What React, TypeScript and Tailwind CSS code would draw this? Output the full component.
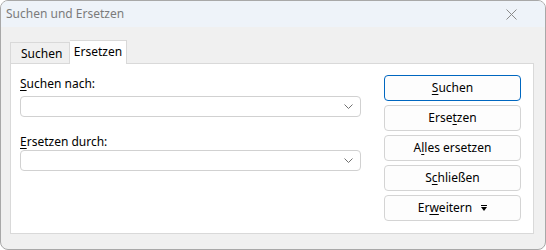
import React from "react";

const font = { fontFamily: '"Noto Sans", "Open Sans", sans-serif' };

function Chevron() {
  return (
    <svg width="9" height="5" viewBox="0 0 9 5" className="text-[#707070]">
      <path d="M0.5 0.5 L4.5 4.5 L8.5 0.5" fill="none" stroke="currentColor" strokeWidth="1" />
    </svg>
  );
}

function Combo() {
  return (
    <div className="h-[21px] w-[341px] rounded-[4px] border border-[#d1d1d1] bg-white flex items-center justify-end pr-[7px]">
      <Chevron />
    </div>
  );
}

function Btn({ children, primary = false }: { children: React.ReactNode; primary?: boolean }) {
  return (
    <div
      className={`h-[26px] w-[137px] rounded-[4px] flex items-center justify-center text-[12px] text-black ${
        primary ? "border border-[#0067c0] bg-[#fdfdfd]" : "border border-[#d4d4d4] bg-[#fdfdfd]"
      }`}
    >
      {children}
    </div>
  );
}

export default function App() {
  return (
    <div
      style={font}
      className="w-[546px] h-[250px] rounded-[8px] border border-[#a8a8a8] overflow-hidden bg-[#f0f0f0] flex flex-col"
    >
      {/* Title bar */}
      <div className="h-[26px] bg-[#eef3f9] flex items-center justify-between pl-[5px] pr-[28px] text-[12px] text-[#7b7b7b]">
        <span>Suchen und Ersetzen</span>
        <svg width="11" height="11" viewBox="0 0 11 11" className="text-[#8a8a8a]">
          <path d="M0.5 0.5 L10.5 10.5 M10.5 0.5 L0.5 10.5" stroke="currentColor" strokeWidth="1" />
        </svg>
      </div>

      <div className="pl-[9px] pr-[11px] pt-[13px]">
        {/* Tabs */}
        <div className="flex items-end h-[23px] text-[12px] text-black">
          <div className="h-[21px] w-[60px] border border-b-0 border-[#d9d9d9] bg-[#f0f0f0] flex items-center pl-[10px] pt-[2px]">
            Suchen
          </div>
          <div className="relative -mb-px h-[24px] w-[57px] border border-b-0 border-[#d9d9d9] border-l-0 bg-white flex items-center justify-center pb-[1px]">
            Ersetzen
          </div>
        </div>

        {/* Panel */}
        <div className="h-[171px] border border-[#d9d9d9] bg-white flex pl-[9px] pt-[11px] gap-[23px]">
          <div className="flex flex-col text-[12px] text-black">
            <div className="leading-[16px] mt-[1px]">
              <span className="underline underline-offset-2">S</span>uchen nach:
            </div>
            <div className="mt-[4px]">
              <Combo />
            </div>
            <div className="leading-[16px] mt-[17px]">
              <span className="underline underline-offset-2">E</span>rsetzen durch:
            </div>
            <div className="mt-[0px]">
              <Combo />
            </div>
          </div>

          <div className="flex flex-col gap-[4px]">
            <Btn primary>
              <span className="underline underline-offset-2">S</span>uchen
            </Btn>
            <Btn>
              Erse<span className="underline underline-offset-2">t</span>zen
            </Btn>
            <Btn>
              A<span className="underline underline-offset-2">l</span>les ersetzen
            </Btn>
            <Btn>
              S<span className="underline underline-offset-2">c</span>hließen
            </Btn>
            <Btn>
              <span>
                Er<span className="underline underline-offset-2">w</span>eitern
              </span>
              <svg width="6" height="6" viewBox="0 0 6 6" className="ml-[9px]">
                <rect x="0" y="0" width="6" height="1" fill="black" />
                <path d="M0 2 L6 2 L3 6 Z" fill="black" />
              </svg>
            </Btn>
          </div>
        </div>
      </div>
    </div>
  );
}
